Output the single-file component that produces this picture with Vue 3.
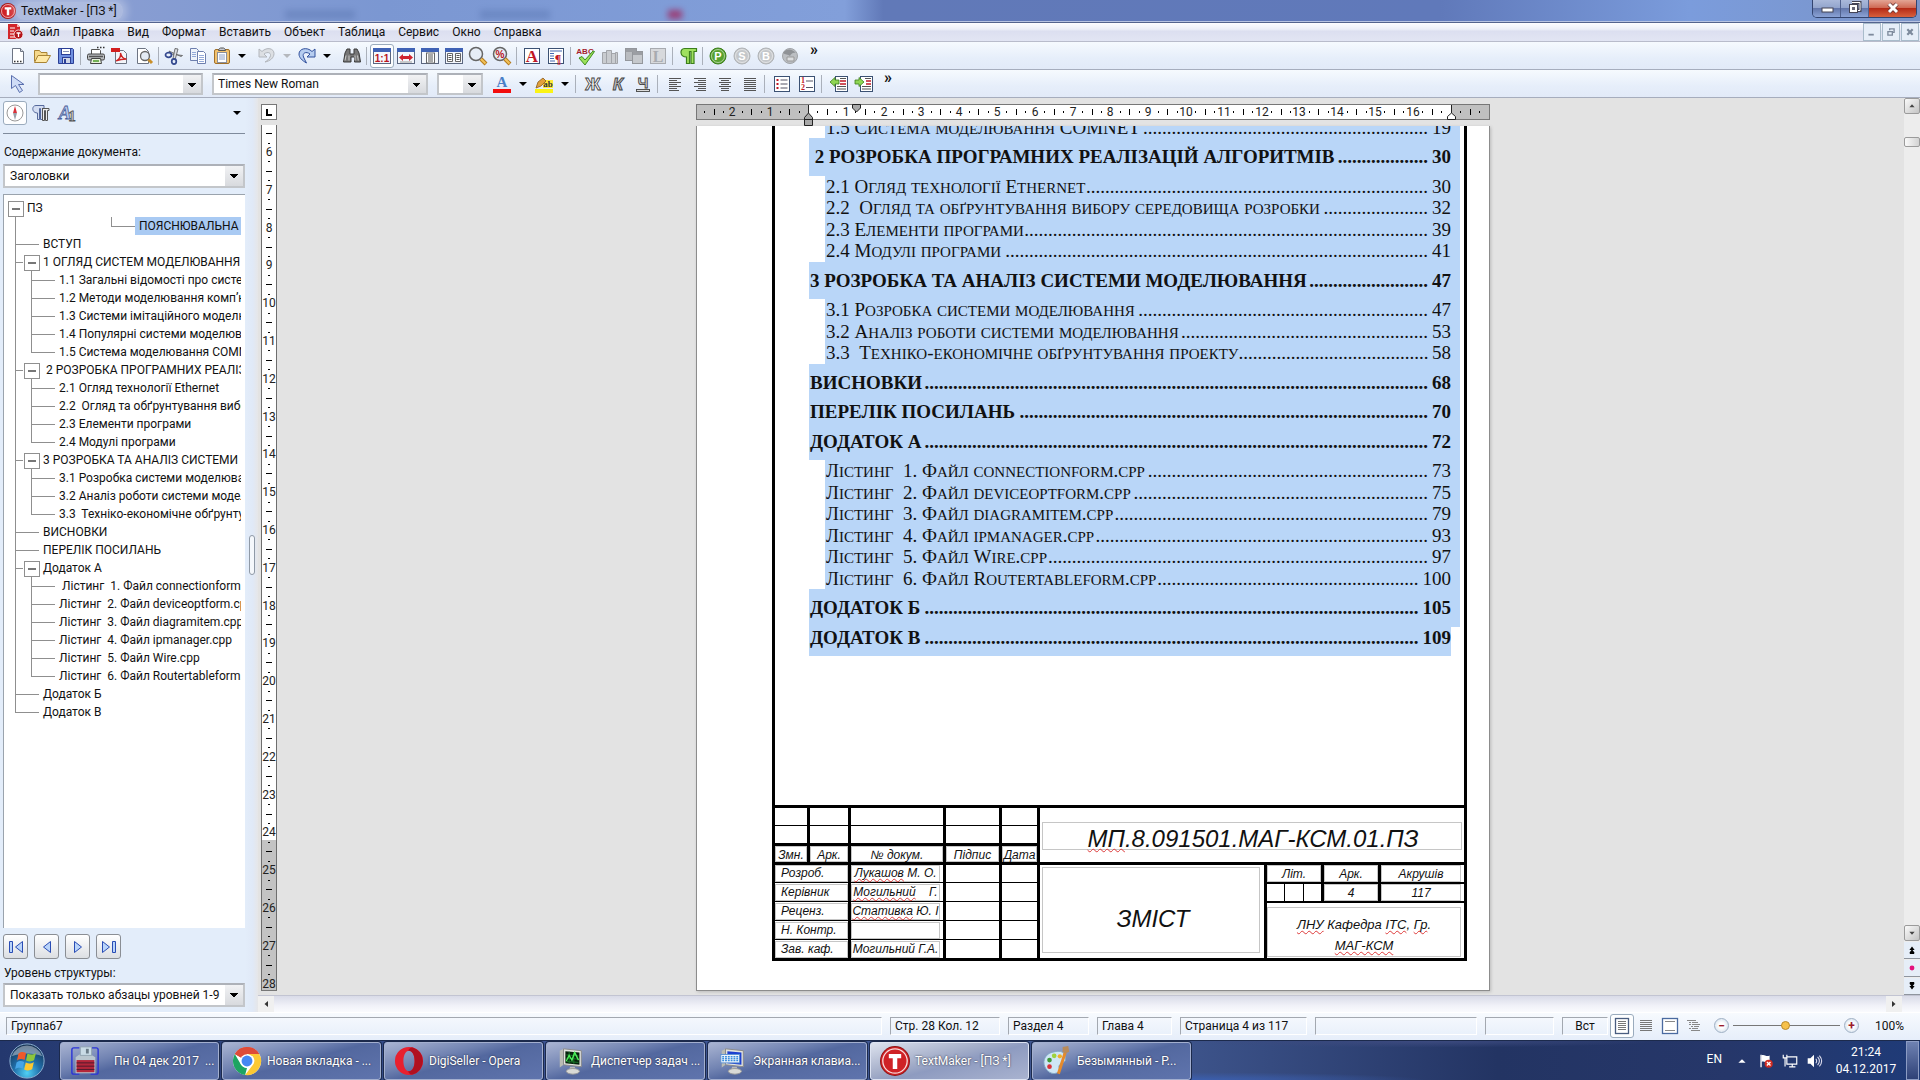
<template>
  <div class="app">
    <header class="titlebar">
      <svg class="title-logo" viewBox="0 0 16 16" v-html="icons.tmLogo"></svg>
      <h1 class="title-text">TextMaker - [ПЗ *]</h1>
      <span class="ghost-tab ghost-1"></span>
      <span class="ghost-tab ghost-2"></span>
      <span class="ghost-tab ghost-3"></span>
      <div class="win-buttons">
        <button class="win-btn" aria-label="Свернуть"><svg viewBox="0 0 28 17"><rect x="9" y="8" width="11" height="4" fill="#fff" stroke="#445" /></svg></button>
        <button class="win-btn" aria-label="Развернуть"><svg viewBox="0 0 28 17"><path d="M11 2.5h8v8h-2" fill="none" stroke="#445" stroke-width="3" /><path d="M11 2.5h8v8h-2" fill="none" stroke="#fff" /><rect x="8.500" y="4.500" width="8" height="8" fill="#fff" stroke="#445" /><rect x="11" y="7" width="3" height="3" fill="#667" /></svg></button>
        <button class="win-btn win-close" aria-label="Закрыть"><svg viewBox="0 0 28 17"><path d="M10 4l8 8M18 4l-8 8" stroke="#633" stroke-width="4.500" /><path d="M10 4l8 8M18 4l-8 8" stroke="#fff" stroke-width="3" /></svg></button>
      </div>
    </header>

    <nav class="menubar">
      <svg class="menu-logo" viewBox="0 0 16 16" v-html="icons.docLogo"></svg>
      <button v-for="m in menus" :key="m" class="menu-item">{{ m }}</button>
      <div class="mdi-buttons">
        <button aria-label="Свернуть документ"><svg viewBox="0 0 18 18"><path d="M5 12h6" stroke="#7d8a9c" stroke-width="2" /></svg></button>
        <button aria-label="Восстановить документ"><svg viewBox="0 0 18 18"><path d="M7.500 7V5.500h5v4H11M5.500 8.500h5v4h-5z" fill="none" stroke="#7d8a9c" stroke-width="1.500" /></svg></button>
        <button aria-label="Закрыть документ"><svg viewBox="0 0 18 18"><path d="M6 6l6 6M12 6l-6 6" stroke="#7d8a9c" stroke-width="2.500" /></svg></button>
      </div>
    </nav>

    <div class="toolbar">
      <template v-for="(t, i) in mainTools" :key="i">
        <span v-if="t === '|'" class="sep"></span>
        <span v-else-if="t === '_'" class="gap"></span>
        <button v-else-if="t === 'v'" class="drop" aria-label="Ещё"></button>
        <button v-else-if="t === 'w'" class="drop drop-off" aria-label="Ещё" disabled></button>
        <button v-else class="tool" :class="{ active: t === 'zoom100' }" :aria-label="t">
          <svg viewBox="0 0 20 20" v-html="icons[t]"></svg>
        </button>
      </template>
      <button class="more" aria-label="Другие кнопки">»</button>
    </div>

    <div class="toolbar toolbar-format">
      <button class="tool tool-pointer" aria-label="Выделение"><svg viewBox="0 0 20 20" v-html="icons.pointer"></svg></button>
      <select class="combo combo-style" aria-label="Стиль"><option></option></select>
      <select class="combo combo-font" aria-label="Шрифт"><option>Times New Roman</option></select>
      <select class="combo combo-size" aria-label="Размер"><option></option></select>
      <template v-for="(t, i) in formatTools" :key="i">
        <span v-if="t === '|'" class="sep"></span>
        <button v-else-if="t === 'v'" class="drop" aria-label="Ещё"></button>
        <button v-else class="tool" :aria-label="t"><svg viewBox="0 0 20 20" v-html="icons[t]"></svg></button>
      </template>
      <button class="more" aria-label="Другие кнопки">»</button>
    </div>

    <main class="workspace">
      <aside class="sidebar">
        <div class="side-tabs">
          <button class="side-tab active" aria-label="Навигация"><svg viewBox="0 0 20 20" v-html="icons.compass"></svg></button>
          <button class="side-tab" aria-label="Стили абзаца"><svg viewBox="0 0 20 20" v-html="icons.paraStyle"></svg></button>
          <button class="side-tab" aria-label="Стили символов"><svg viewBox="0 0 20 20" v-html="icons.charStyle"></svg></button>
          <button class="drop side-menu" aria-label="Меню панели"></button>
        </div>
        <label class="side-label" for="contents">Содержание документа:</label>
        <select id="contents" class="combo side-combo"><option>Заголовки</option></select>
        <ul class="tree">
          <li v-for="(n, i) in tree" :key="i" class="tree-row">
            <span v-for="(g, k) in n[0]" :key="k" class="guide" :class="guides[g]"></span>
            <span class="tree-text" :class="{ selected: i === 1 }">{{ n[1] }}</span>
          </li>
        </ul>
        <div class="nav-buttons">
          <button aria-label="В начало"><svg viewBox="0 0 20 20"><path d="M3.500 4.500h3v11h-3zM16.500 4.500v11L9.500 10z" /></svg></button>
          <button aria-label="Назад"><svg viewBox="0 0 20 20"><path d="M13.500 4.500v11L6.500 10z" /></svg></button>
          <button aria-label="Вперёд"><svg viewBox="0 0 20 20"><path d="M6.500 4.500v11l7-5.500z" /></svg></button>
          <button aria-label="В конец"><svg viewBox="0 0 20 20"><path d="M3.500 4.500v11l7-5.500zM13.500 4.500h3v11h-3z" /></svg></button>
        </div>
        <label class="side-label" for="level">Уровень структуры:</label>
        <select id="level" class="combo side-combo"><option>Показать только абзацы уровней 1-9</option></select>
      </aside>
      <div class="splitter"><span class="splitter-grip"></span></div>

      <section class="document">
        <div class="view">
          <div class="left-rail">
            <button class="tab-kind" aria-label="Тип табуляции"><svg viewBox="0 0 14 14"><path d="M5 4v6h5" fill="none" stroke="#000" stroke-width="2" /></svg></button>
            <svg class="ruler-v">
              <rect x="0" y="0" width="16" height="100%" fill="#fff" />
              <rect x="0" y="715" width="16" height="100%" fill="#c3c3c3" />
              <g v-for="m in vMarks" :key="m.y">
                <text v-if="m.n" x="8" :y="m.y + 4" text-anchor="middle">{{ m.n }}</text>
                <rect v-else :x="8 - m.w / 2" :y="m.y" :width="m.w" height="1" />
              </g>
              <path d="M0.500 0V2000M15.500 0V2000" stroke="#6e6e6e" />
            </svg>
          </div>
          <div class="canvas">
            <div class="ruler-wrap">
              <svg class="ruler-h" viewBox="0 0 794 24">
                <rect x="0.500" y="0.500" width="793" height="15" fill="#c0c0c0" stroke="#777" />
                <rect x="112" y="1" width="643" height="14" fill="#fff" />
                <g v-for="m in hMarks" :key="m.x">
                  <text v-if="m.n" :x="m.x" y="12" text-anchor="middle">{{ m.n }}</text>
                  <rect v-else :x="m.x" :y="8 - m.h / 2" width="1" :height="m.h" />
                </g>
                <path d="M156.500 0.500h8v3.500l-4 4-4-4z" fill="#a8a8a8" stroke="#222" />
                <path d="M112.500 1v8" stroke="#222" />
                <path d="M108.500 21.500v-8l4-4.500 4 4.500v8zM108.500 15.500h8" fill="#a8a8a8" stroke="#222" />
                <path d="M755.500 1v8" stroke="#222" />
                <path d="M751.500 15.500v-3l4-3.500 4 3.500v3z" fill="#fff" stroke="#222" />
              </svg>
            </div>
            <div class="paper-area">
              <article class="paper">
                <div class="frame">
                  <div ref="tocEl" class="toc">
                    <p v-for="(r, i) in toc" :key="i" class="toc-row" :class="{ chapter: r[2] }">
                      <span class="toc-title"><template v-for="(s, k) in split(r)" :key="k"><small v-if="s.small">{{ s.text }}</small><template v-else>{{ s.text }}</template></template></span>
                      <span class="leader" aria-hidden="true">{{ '.'.repeat(dots[i] || 0) }}</span>
                      <span class="toc-page">{{ r[1] }}</span>
                    </p>
                  </div>

                  <div class="stamp">
                    <table class="changes">
                      <colgroup><col class="c1"><col class="c2"><col class="c3"><col class="c4"><col class="c5"></colgroup>
                      <tbody>
                        <tr class="short"><td></td><td></td><td></td><td></td><td></td></tr>
                        <tr class="thick tall"><td></td><td></td><td></td><td></td><td></td></tr>
                        <tr class="thick head">
                          <td v-for="h in ['Змн.', 'Арк.', '№ докум.', 'Підпис', 'Дата']" :key="h"><div class="cell-box">{{ h }}</div></td>
                        </tr>
                        <tr v-for="(p, i) in people" :key="p[0]" :class="{ short: i === 0 || i === 4 }">
                          <td colspan="2"><div class="cell-box left">{{ p[0] }}</div></td>
                          <td class="name"><div class="cell-box"><span :class="{ typo: p[3] }">{{ p[1] }}</span>{{ p[2] }}</div></td>
                          <td></td><td></td>
                        </tr>
                      </tbody>
                    </table>
                    <div class="stamp-right">
                      <div class="doc-number"><div class="cell-box"><span class="typo">МП</span>.8.091501.МАГ-КСМ.01.ПЗ</div></div>
                      <div class="doc-bottom">
                        <div class="doc-title"><div class="cell-box">ЗМІСТ</div></div>
                        <div class="doc-side">
                          <div class="side-grid">
                            <div><div class="cell-box">Літ.</div></div>
                            <div><div class="cell-box">Арк.</div></div>
                            <div><div class="cell-box">Акрушів</div></div>
                            <div class="lits"><i></i><i></i><i></i></div>
                            <div><div class="cell-box">4</div></div>
                            <div><div class="cell-box">117</div></div>
                          </div>
                          <div class="dept"><div class="cell-box"><span><span class="typo">ЛНУ</span> Кафедра <span class="typo">ІТС</span>, <span class="typo">Гр</span>.</span><span class="typo">МАГ-КСМ</span></div></div>
                        </div>
                      </div>
                    </div>
                  </div>
                </div>
              </article>
            </div>
          </div>
          <div class="vscroll">
            <button class="sb-btn" aria-label="Вверх"><svg viewBox="0 0 16 16"><path d="M5 9.500h6L8 6z" fill="#444" /></svg></button>
            <div class="sb-track"><span class="sb-thumb"></span></div>
            <button class="sb-btn" aria-label="Вниз"><svg viewBox="0 0 16 16"><path d="M5 6.500h6L8 10z" fill="#444" /></svg></button>
            <button class="sb-nav" aria-label="Предыдущая страница"><svg viewBox="0 0 16 16"><path d="M5 8l3-4 3 4zM5 11l3-4 3 4zM5.500 11h5v1.500h-5z" /></svg></button>
            <button class="sb-nav" aria-label="Объект перехода"><svg viewBox="0 0 16 16"><circle cx="8" cy="8" r="2.800" fill="#e3127e" /></svg></button>
            <button class="sb-nav" aria-label="Следующая страница"><svg viewBox="0 0 16 16"><path d="M5 8l3 4 3-4zM5 5l3 4 3-4zM5.500 3.500h5V5h-5z" /></svg></button>
          </div>
        </div>
        <div class="hscroll">
          <button aria-label="Влево"><svg viewBox="0 0 16 16"><path d="M10 5v6L6.500 8z" fill="#333" /></svg></button>
          <button aria-label="Вправо"><svg viewBox="0 0 16 16"><path d="M6 5v6l3.500-3z" fill="#333" /></svg></button>
        </div>
      </section>
    </main>

    <footer class="statusbar">
      <span class="panel p-object">Группа67</span>
      <span class="panel p-pos">Стр. 28 Кол. 12</span>
      <span class="panel p-section">Раздел 4</span>
      <span class="panel p-chapter">Глава 4</span>
      <span class="panel p-page">Страница 4 из 117</span>
      <span class="panel p-wide"></span>
      <span class="panel p-empty"></span>
      <span class="panel p-ins">Вст</span>
      <button v-for="v in ['viewPage', 'viewCont', 'viewObj', 'viewOutline']" :key="v" class="view-btn" :class="{ active: v === 'viewPage' }" :aria-label="v">
        <svg viewBox="0 0 20 20" v-html="icons[v]"></svg>
      </button>
      <button class="zoom-btn zoom-out" aria-label="Уменьшить">−</button>
      <input class="zoom-range" type="range" min="0" max="200" value="98" aria-label="Масштаб">
      <button class="zoom-btn" aria-label="Увеличить">+</button>
      <span class="zoom-value">100%</span>
    </footer>

    <div class="taskbar">
      <button class="start" aria-label="Пуск"><svg viewBox="0 0 40 40" v-html="icons.start"></svg></button>
      <button v-for="t in tasks" :key="t[0]" class="task" :class="{ current: t[0] === 'tmLogo' }">
        <svg :viewBox="t[0] === 'tmLogo' ? '0 0 16 16' : '0 0 32 32'" v-html="icons[t[0]]"></svg>
        <span class="task-text" :class="{ shifted: t[0] === 'floppy' }">{{ t[1] }}</span>
      </button>
      <div class="tray">
        <span class="lang">EN</span>
        <button aria-label="Скрытые значки"><svg viewBox="0 0 20 20"><path d="M6 12h8l-4-4z" fill="#fff" /></svg></button>
        <button aria-label="Центр поддержки"><svg viewBox="0 0 20 20"><path d="M4.500 3v14" stroke="#fff" stroke-width="1.500" /><path d="M5 4c3-2 5 2 9 0v7c-4 2-6-2-9 0z" fill="#fff" /><circle cx="13" cy="13" r="4.500" fill="#d22c22" /><path d="M11 11l4 4M15 11l-4 4" stroke="#fff" stroke-width="1.500" /></svg></button>
        <button aria-label="Сеть"><svg viewBox="0 0 20 20" fill="none" stroke="#fff"><path d="M6.500 5.500h11v8h-11zM9 16.500h7M12.500 14v2M2.500 3v3.500h4V3M4.500 7v9" stroke-width="1.300" /></svg></button>
        <button aria-label="Громкость"><svg viewBox="0 0 20 20"><path d="M3 7h3l4-4v14l-4-4H3z" fill="#fff" /><path d="M12 7.500q2 2.500 0 5M14 5.500q4 4.500 0 9M16 4q5 6 0 12" fill="none" stroke="#dde" stroke-width="1.200" /></svg></button>
        <div class="clock"><span>21:24</span><span>04.12.2017</span></div>
        <button class="show-desktop" aria-label="Свернуть все окна"></button>
      </div>
    </div>
  </div>
</template>

<script setup>
import { onMounted, onUnmounted, ref } from 'vue';

const menus = ['Файл', 'Правка', 'Вид', 'Формат', 'Вставить', 'Объект', 'Таблица', 'Сервис', 'Окно', 'Справка'];

// '|' разделитель, '_' отступ, 'v' стрелка меню, 'w' недоступная стрелка
const mainTools = [
  'fileNew', 'open', 'save', '|', 'print', 'pdf', 'preview', '|', 'cut', 'copy', 'paste', 'v', '_',
  'undo', 'w', 'redo', 'v', '_', 'find', '|', 'zoom100', 'zoomWidth', 'zoomPage', 'zoomTwo', 'lens', 'lensPct', '|',
  'charFmt', 'paraFmt', '|', 'spell', 'thes', 'objs', 'boxL', '|', 'pilcrow', '|', 'ballP', 'ballS', 'ballB', 'globe',
];
const formatTools = [
  'fontColor', 'v', 'marker', 'v', '|', 'bold', 'italic', 'underline', '|',
  'alignL', 'alignR', 'alignC', 'alignJ', '|', 'bullets', 'numbers', '|', 'outdent', 'indent',
];

const guides = { v: 'g-v', t: 'g-t', l: 'g-l', h: 'g-h', b: 'g-box', _: 'g-none' };
const tree = [
  ['b', 'ПЗ'],
  ['v_____lh', 'ПОЯСНЮВАЛЬНА'],
  ['th', 'ВСТУП'],
  ['tb', '1 ОГЛЯД СИСТЕМ МОДЕЛЮВАННЯ'],
  ['vth', '1.1 Загальні відомості про системи'],
  ['vth', '1.2 Методи моделювання комп’ютерних'],
  ['vth', '1.3 Системи імітаційного моделювання'],
  ['vth', '1.4 Популярні системи моделювання'],
  ['vlh', '1.5 Система моделювання COMNET'],
  ['tb', ' 2 РОЗРОБКА ПРОГРАМНИХ РЕАЛІЗАЦІЙ'],
  ['vth', '2.1 Огляд технології Ethernet'],
  ['vth', '2.2  Огляд та обґрунтування вибору'],
  ['vth', '2.3 Елементи програми'],
  ['vlh', '2.4 Модулі програми'],
  ['tb', '3 РОЗРОБКА ТА АНАЛІЗ СИСТЕМИ'],
  ['vth', '3.1 Розробка системи моделювання'],
  ['vth', '3.2 Аналіз роботи системи моделювання'],
  ['vlh', '3.3  Техніко-економічне обґрунтування'],
  ['th', 'ВИСНОВКИ'],
  ['th', 'ПЕРЕЛІК ПОСИЛАНЬ'],
  ['tb', 'Додаток А'],
  ['vth', ' Лістинг  1. Файл connectionform.cpp'],
  ['vth', 'Лістинг  2. Файл deviceoptform.cpp'],
  ['vth', 'Лістинг  3. Файл diagramitem.cpp'],
  ['vth', 'Лістинг  4. Файл ipmanager.cpp'],
  ['vth', 'Лістинг  5. Файл Wire.cpp'],
  ['vlh', 'Лістинг  6. Файл Routertableform.cpp'],
  ['th', 'Додаток Б'],
  ['lh', 'Додаток В'],
];

const toc = [
  ['1.5 Система моделювання COMNET', 19],
  [' 2 РОЗРОБКА ПРОГРАМНИХ РЕАЛІЗАЦІЙ АЛГОРИТМІВ', 30, true],
  ['2.1 Огляд технології Ethernet', 30],
  ['2.2  Огляд та обґрунтування вибору середовища розробки', 32],
  ['2.3 Елементи програми', 39],
  ['2.4 Модулі програми', 41],
  ['3 РОЗРОБКА ТА АНАЛІЗ СИСТЕМИ МОДЕЛЮВАННЯ', 47, true],
  ['3.1 Розробка системи моделювання', 47],
  ['3.2 Аналіз роботи системи моделювання', 53],
  ['3.3  Техніко-економічне обґрунтування проекту', 58],
  ['ВИСНОВКИ', 68, true],
  ['ПЕРЕЛІК ПОСИЛАНЬ', 70, true],
  ['ДОДАТОК А', 72, true],
  ['Лістинг  1. Файл connectionform.cpp', 73],
  ['Лістинг  2. Файл deviceoptform.cpp', 75],
  ['Лістинг  3. Файл diagramitem.cpp', 79],
  ['Лістинг  4. Файл ipmanager.cpp', 93],
  ['Лістинг  5. Файл Wire.cpp', 97],
  ['Лістинг  6. Файл Routertableform.cpp', 100],
  ['ДОДАТОК Б', 105, true],
  ['ДОДАТОК В', 109, true],
];

// отточие: точка занимает четверть кегля
const tocEl = ref(null);
const dots = ref([]);
function fillLeaders() {
  dots.value = [...tocEl.value.querySelectorAll('.leader')].map((el) => {
    const size = parseFloat(getComputedStyle(el).fontSize);
    return Math.floor(el.clientWidth / (size / 4));
  });
}
onMounted(() => {
  fillLeaders();
  window.addEventListener('resize', fillLeaders);
});
onUnmounted(() => window.removeEventListener('resize', fillLeaders));

// строчные буквы выводятся малыми прописными
function split(row) {
  return row[0]
    .split(/([a-zа-яіїєґ]+)/)
    .filter(Boolean)
    .map((text) => ({ text, small: /^[a-zа-яіїєґ]/.test(text) }));
}

const people = [
  ['Розроб.', 'Лукашов', ' М. О.', true],
  ['Керівник', 'Могильний', '    Г.', true],
  ['Реценз.', 'Стативка', ' Ю. І', true],
  ['Н. Контр.', '', '', false],
  ['Зав. каф.', 'Могильний Г.А.', '', false],
];

const CM = 37.8;
const hMarks = [];
for (let q = -11; q <= 71; q++) {
  if (q === 0 || q === 68) continue;
  const x = Math.round(112 + (q * CM) / 4);
  if (q % 4 === 0) hMarks.push({ x, n: Math.abs(q / 4) });
  else hMarks.push({ x, h: q % 2 ? 2 : 6 });
}
const vMarks = [];
for (let q = 22; q <= 112; q++) {
  const y = Math.round(27 + ((q - 24) * CM) / 4);
  if (q % 4 === 0) vMarks.push({ y, n: q / 4 });
  else vMarks.push({ y, w: q % 2 ? 2 : 6 });
}

const tasks = [
  ['floppy', 'Пн 04 дек 2017  ...'],
  ['chrome', 'Новая вкладка - ...'],
  ['opera', 'DigiSeller - Opera'],
  ['taskmgr', 'Диспетчер задач ...'],
  ['osk', 'Экранная клавиа...'],
  ['tmLogo', 'TextMaker - [ПЗ *]'],
  ['paint', 'Безымянный - P...'],
];

const ball = (c, e, l) => `<circle cx="10" cy="10" r="8" fill="${c}" stroke="${e}"/><circle cx="10" cy="10" r="6.500" fill="none" stroke="#fff" stroke-opacity=".5"/><text x="10" y="14" text-anchor="middle" font-family="Liberation Sans" font-weight="700" font-size="11" fill="#fff">${l}</text>`;
const win = (inner) => `<rect x="1.500" y="2.500" width="17" height="15" fill="#f4f7fc" stroke="#5a6680"/><path d="M1 2h18v4H1z" fill="#3f62b5"/>${inner}`;
const lines = (d, c = '#555') => `<path d="${d}" stroke="${c}" stroke-width="1.200" fill="none"/>`;
const lensShape = '<circle cx="8" cy="8" r="6.500" fill="#e6edf6" stroke="#666" stroke-width="1.500"/><path d="M13 13l5 5" stroke="#b57a1c" stroke-width="4"/><path d="M13 13l4.500 4.500" stroke="#f1c25a" stroke-width="2"/>';
const monitor = (screen) => `<path d="M4 5l4-2v17l-4 3z" fill="#b9bcb4"/><path d="M8 3l19 2v17l-19-2z" fill="#e3e4df" stroke="#888"/>${screen}<path d="M15 22h5l1 4h-7z" fill="#bbb"/><ellipse cx="18" cy="27" rx="7" ry="3" fill="#d9dad6" stroke="#999"/>`;

const icons = {
  tmLogo: '<circle cx="8" cy="8" r="8" fill="#8f1414"/><circle cx="8" cy="8" r="7.500" fill="#cf2226"/><circle cx="8" cy="8" r="6.500" fill="none" stroke="#f7d9d9" stroke-width=".7"/><path d="M4.700 4.300h6.600v2.200H9.200v5.700H6.800V6.500H4.700z" fill="#fff"/>',
  docLogo: '<path d="M1 0h9l3 3v12H1z" fill="#d3262b"/><path d="M10 0v3h3z" fill="#f5b4b4"/><path d="M3 4h5M3 7h4M3 10h4M3 13h5" stroke="#fff" stroke-width="1.200"/><circle cx="11.500" cy="10.500" r="4.500" fill="#b31218" stroke="#fff" stroke-width=".8"/><path d="M9.500 9h4M11.500 9v4" stroke="#fff" stroke-width="1.300"/>',
  fileNew: '<path d="M4.500 2.500h8l3 3v12h-11z" fill="#fff" stroke="#6d7483"/><path d="M12.500 2.500v3h3" fill="#d9dde5" stroke="#6d7483"/><path d="M6 15.500h1.500M9 15.500h1.500M12 15.500h1.500" stroke="#333" stroke-width="1.300"/>',
  open: '<path d="M2.500 15.500v-11h5l1.500 2h6v3" fill="#f5d98c" stroke="#a98435"/><path d="M2.500 16.500l3.500-7h12.500l-4 7z" fill="#ffe9a6" stroke="#a98435"/>',
  save: '<path d="M2.500 2.500h14l1 1v14h-15z" fill="#6f8fe0" stroke="#2b3f96"/><rect x="5.500" y="2.500" width="9" height="6" fill="#fff" stroke="#2b3f96"/><path d="M7 5.500h6" stroke="#8893b8"/><rect x="6.500" y="11.500" width="8" height="6" fill="#cfd6e8" stroke="#2b3f96"/><path d="M8 13h2v4H8z" fill="#2b3f96"/>',
  print: '<path d="M5.500 8V3.500h8l1 1V8" fill="#fff" stroke="#555"/><path d="M11 1.500h1.500M14 1.500h1.500M17 1.500h1.500" stroke="#333" stroke-width="1.500"/><rect x="1.500" y="8" width="17" height="6" rx="1.500" fill="#b9bcc0" stroke="#444"/><path d="M3 10.500h14" stroke="#555" stroke-width="1.500"/><path d="M5.500 12.500h9l1 5h-11z" fill="#e8f3dd" stroke="#444"/><path d="M7 15h6" stroke="#4c9a2a" stroke-width="1.500"/>',
  pdf: '<path d="M5.500 4.500h8l3 3v10h-11z" fill="#f3f5f9" stroke="#6d7483"/><rect x="1" y="2" width="9" height="4" fill="#d21f1f"/><path d="M6 15c4-2 5-5 4.500-8 1 4 2.500 6 6 6-4 0-7 .5-10.500 2z" fill="none" stroke="#c22" stroke-width="1.300"/>',
  preview: '<path d="M3.500 2.500h8l3 3v12h-11z" fill="#fff" stroke="#6d7483"/><circle cx="11" cy="10" r="4.500" fill="#dfe7f2" fill-opacity=".85" stroke="#666" stroke-width="1.300"/><path d="M14.500 13.500l3.500 3.500" stroke="#c98f2a" stroke-width="3"/>',
  cut: '<path d="M5 5l12 5.500 1.500-1L7 8z" fill="#d9dbe0" stroke="#555" stroke-width=".8"/><path d="M11 2.500l-2 10 2 1.500 3-11z" fill="#d9dbe0" stroke="#555" stroke-width=".8"/><ellipse cx="4.500" cy="9" rx="3" ry="2.300" fill="none" stroke="#34498f" stroke-width="1.700"/><ellipse cx="10" cy="15.500" rx="2.300" ry="2.600" fill="none" stroke="#34498f" stroke-width="1.700"/>',
  copy: '<path d="M2.500 2.500h6l2 2v10h-8z" fill="#eef3fb" stroke="#6d7fae"/><path d="M9.500 5.500h6l2 2v10h-8z" fill="#fff" stroke="#6d7fae"/>' + lines('M4 6.500h4M4 8.500h4M4 10.500h4M11 9.500h5M11 11.500h5M11 13.500h5M11 15.500h5', '#93a9d8'),
  paste: '<rect x="2.500" y="3.500" width="15" height="14" rx="1.500" fill="#f3c26d" stroke="#a0702a"/><rect x="5.500" y="6.500" width="9" height="10" fill="#fff" stroke="#8a8f9c"/><path d="M6.500 4.500h7v-1l-2-1.500h-3l-2 1.500z" fill="#c7cbd3" stroke="#555"/>' + lines('M7 9h6M7 11h6M7 13h6', '#8ea1c9'),
  undo: '<path d="M2 3v8h8L7 8c4-3 8-1 6 3-.8 2-2.500 3.500-5 5 5-1 9-4 9-8.500C17 2.500 10 .5 5 5.500z" fill="#dcdfe3" stroke="#b2b6bc"/>',
  redo: '<path d="M18 3v8h-8l3-3C9 5 5 7 6.500 11c.8 2 2 4 3 6C5 14.500 2 11.500 2 8 2 2.500 10 .5 15 5.500z" fill="#b6cdf0" stroke="#31509c"/>',
  find: '<path d="M3 7l2-4h3v5h4V3h3l2 4 1.500 9h-6v-5h-3.500v5H1.500z" fill="#777" stroke="#3a3a3a"/><path d="M4 9.500l-1 5M7 9.500v5M13 9.500v5M15.500 9.500l.8 5" stroke="#ccc"/>',
  zoom100: win('<text x="10" y="16" text-anchor="middle" font-family="Liberation Sans" font-weight="700" font-size="10" fill="#b81420">1:1</text>'),
  zoomWidth: win('<path d="M3 11.500l4-3.500v2h6V8l4 3.500-4 3.500v-2H7v2z" fill="#cf2430"/>' + lines('M4 16h12', '#aaa')),
  zoomPage: win('<rect x="6.500" y="7" width="8" height="10" fill="#fff" stroke="#666"/>' + lines('M8 9h5M8 11h5M8 13h5M8 15h5')),
  zoomTwo: win('<path d="M3.500 7.500h5v8h-5zM11.500 7.500h5v8h-5z" fill="#fff" stroke="#666"/>' + lines('M4.500 9.500h3M4.500 11.500h3M4.500 13.500h3M12.500 9.500h3M12.500 11.500h3M12.500 13.500h3')),
  lens: lensShape,
  lensPct: lensShape + '<text x="8" y="11.500" text-anchor="middle" font-family="Liberation Sans" font-weight="700" font-size="10" fill="#b81420">%</text>',
  charFmt: '<rect x="2.500" y="2.500" width="15" height="15" fill="#fff" stroke="#3b5173"/><text x="10" y="16" text-anchor="middle" font-family="Liberation Serif" font-weight="700" font-size="17" fill="#c01826">A</text>',
  paraFmt: '<rect x="2.500" y="2.500" width="15" height="15" fill="#fff" stroke="#3b5173"/>' + lines('M4 5h12M4 7.500h4M4 10h4M4 12.500h4M4 15h5', '#4468b0') + '<text x="12" y="17" text-anchor="middle" font-family="Liberation Serif" font-weight="700" font-size="12" fill="#c01826">¶</text>',
  spell: '<text x="9" y="8" text-anchor="middle" font-family="Liberation Sans" font-weight="700" font-size="8" fill="#a51d2d">ABC</text><path d="M3 12l3-1.500 3 3.500 8-9 1.500.5L9 19z" fill="#9be05a" stroke="#3f8f1f"/>',
  thes: '<path d="M2.500 6.500h4v11h-4zM6.500 4.500h5v13h-5zM11.500 7.500h4v10h-4zM15.500 6.500h2v11h-2z" fill="#c9ccd0" stroke="#a2a5aa"/>',
  objs: '<rect x="1.500" y="2.500" width="11" height="12" fill="#b9bcc0" stroke="#94979c"/><rect x="8.500" y="5.500" width="10" height="12" fill="#c5c8cc" stroke="#94979c"/><path d="M2 3h10v3H2zM9 6h9v3H9z" fill="#9b9ea3"/>',
  boxL: '<rect x="2.500" y="2.500" width="15" height="15" fill="#d7d9dc" stroke="#a8abb0"/><text x="10" y="16" text-anchor="middle" font-family="Liberation Serif" font-weight="700" font-size="16" fill="#a8abb0">L</text>',
  pilcrow: '<path d="M6.500 2.500h12v3h-2.500v12h-3v-12h-1.500v12h-3v-6.500c-7 0-7-8.500-2-8.500z" fill="#9fe05f" stroke="#3c7f1c" stroke-width="1.200"/>',
  ballP: ball('#57a12f', '#3c7f1c', 'P'),
  ballS: ball('#c4c7ca', '#b0b3b6', 'S'),
  ballB: ball('#c4c7ca', '#b0b3b6', 'B'),
  globe: '<circle cx="10" cy="10" r="7.500" fill="#bcbfc3" stroke="#a0a3a7"/><path d="M3 7c4-5 9-4 13 0-3-1-5 1-6 3-2-2-5-1-7-3z" fill="#8f9296"/><path d="M7 11h7v4H7z" fill="#dcdee0" stroke="#999"/>',
  pointer: '<path d="M3.500 1.500v13l4-3 4 7 3-2-4-6h5.500z" fill="#cfdcf6" stroke="#5a6fae"/>',
  fontColor: '<text x="10" y="13" text-anchor="middle" font-family="Liberation Serif" font-weight="700" font-size="15" fill="#4a7fc8">A</text><rect x="1" y="15" width="18" height="4" fill="#f20d0d"/>',
  marker: '<rect x="9" y="6" width="10" height="8" fill="#ffe93a"/><path d="M2 14l2-6 5-4 3 3-5 5z" fill="#e2a13c" stroke="#8a5b1a" stroke-width=".8"/><text x="14" y="13" text-anchor="middle" font-family="Liberation Serif" font-weight="700" font-size="9" fill="#333">ab</text><rect x="1" y="15" width="18" height="4" fill="#fbf315"/>',
  bold: '<text x="10" y="16" text-anchor="middle" font-family="Liberation Sans" font-weight="700" font-size="17" fill="#fff" stroke="#444" stroke-width=".9">Ж</text>',
  italic: '<text x="10" y="16" text-anchor="middle" font-family="Liberation Sans" font-weight="700" font-style="italic" font-size="17" fill="#bbb" stroke="#444" stroke-width=".9">К</text>',
  underline: '<text x="10" y="14" text-anchor="middle" font-family="Liberation Sans" font-weight="700" font-size="15" fill="#ddd" stroke="#444" stroke-width=".9">Ч</text><rect x="3.500" y="15.500" width="13" height="2" fill="#ddd" stroke="#444" stroke-width=".9"/>',
  alignL: lines('M4 4.500h12M4 6.500h8M4 8.500h12M4 10.500h8M4 12.500h12M4 14.500h8M4 16.500h10'),
  alignR: lines('M4 4.500h12M8 6.500h8M4 8.500h12M8 10.500h8M4 12.500h12M8 14.500h8M6 16.500h10'),
  alignC: lines('M4 4.500h12M6 6.500h8M4 8.500h12M6 10.500h8M4 12.500h12M6 14.500h8M6 16.500h8'),
  alignJ: lines('M4 4.500h12M4 6.500h12M4 8.500h12M4 10.500h12M4 12.500h12M4 14.500h12M4 16.500h12'),
  bullets: '<rect x="2.500" y="2.500" width="15" height="15" fill="#fff" stroke="#3b5173"/><path d="M4.500 6h2M4.500 10h2M4.500 14h2" stroke="#c01826" stroke-width="2"/>' + lines('M8.500 6h7M8.500 10h7M8.500 14h7', '#556'),
  numbers: '<rect x="2.500" y="2.500" width="15" height="15" fill="#fff" stroke="#3b5173"/><text x="6" y="9" text-anchor="middle" font-family="Liberation Serif" font-weight="700" font-size="8" fill="#c01826">1</text><text x="6" y="16" text-anchor="middle" font-family="Liberation Serif" font-weight="700" font-size="8" fill="#c01826">2</text>' + lines('M9 7h7M9 13.500h7', '#556'),
  outdent: '<rect x="6.500" y="2.500" width="12" height="15" fill="#fff" stroke="#3b5173"/>' + lines('M11 4.500h6M8 12.500h9M8 15h9') + '<path d="M11 7h6M11 10h6" stroke="#c01826" stroke-width="1.500"/><path d="M1 8l5-4.500V6h4v4H6v2.500z" fill="#8fd653" stroke="#3c7f1c" stroke-width=".8"/>',
  indent: '<rect x="6.500" y="2.500" width="12" height="15" fill="#fff" stroke="#3b5173"/>' + lines('M11 4.500h6M8 12.500h9M8 15h9') + '<path d="M12 7h5M12 10h5" stroke="#c01826" stroke-width="1.500"/><path d="M10 8L5 3.500V6H1v4h4v2.500z" fill="#8fd653" stroke="#3c7f1c" stroke-width=".8"/>',
  compass: '<circle cx="10" cy="10" r="8" fill="#fff" stroke="#999"/><path d="M10 3l2 7H8z" fill="#d8323a"/><path d="M10 17l-2-7h4z" fill="#9aa0aa"/>',
  paraStyle: '<path d="M5 2.500h8v3h-1.500v11h-2v-11h-1v11h-2V10c-6 0-6-7.500-1.500-7.500z" fill="#d3ddf2" stroke="#55699c"/><path d="M11 5.500h7v2h-1.500v10h-2v-10h-1v10h-2V5.500z" fill="#eee" stroke="#555"/>',
  charStyle: '<text x="8" y="16" text-anchor="middle" font-family="Liberation Serif" font-weight="700" font-style="italic" font-size="19" fill="#b9c9ea" stroke="#4a5f99" stroke-width=".8">A</text><text x="15" y="18" text-anchor="middle" font-family="Liberation Serif" font-weight="700" font-size="15" fill="#ccc" stroke="#555" stroke-width=".8">1</text>',
  viewPage: '<rect x="3.500" y="2.500" width="13" height="15" fill="#fff" stroke="#4a5d80" stroke-width="1.300"/>' + lines('M6 5.500h8M6 7.500h8M6 9.500h8M6 11.500h8M6 13.500h8', '#777'),
  viewCont: lines('M4 4.500h12M4 6.500h12M4 8.500h12M4 10.500h12M4 12.500h12M4 14.500h12', '#777'),
  viewObj: '<rect x="2.500" y="2.500" width="15" height="15" fill="#fff" stroke="#4a6aa0" stroke-width="1.300"/>' + lines('M5 5.500h10M5 14.500h10', '#888'),
  viewOutline: lines('M3 4.500h9M5 6.500h2M8 6.500h6M5 8.500h2M8 8.500h8M7 10.500h2M10 10.500h5M5 12.500h2M8 12.500h6M7 14.500h9', '#888'),
  start: '<defs><radialGradient id="orb" cx=".5" cy=".85" r=".8"><stop offset="0" stop-color="#4fd0f5"/><stop offset=".5" stop-color="#1f6da8"/><stop offset="1" stop-color="#173456"/></radialGradient></defs><circle cx="20" cy="20" r="18" fill="url(#orb)" stroke="#8fb4d6"/><path d="M4 15a17 17 0 0132 0c-9-4-22-4-32 0z" fill="#fff" fill-opacity=".4"/><path d="M11 12c3-2 5-2 8-.5L17.500 19c-3-1.500-5-1.300-8 .5z" fill="#ee5a2a"/><path d="M20.500 12c3 1.500 5.500 1.500 9-.5L27.500 19c-3 2-5.500 1.800-8.500.5z" fill="#8dc63c"/><path d="M9 21.500c3-2 5-2 8-.5l-1.500 7c-3-1.500-5-1.300-8 .5z" fill="#45a5e8"/><path d="M18.700 21.500c3 1.500 5.500 1.500 8.500-.5l-1.700 7.500c-3 2-5.500 1.800-8.500.5z" fill="#fdc830"/>',
  floppy: '<path d="M10 2H4q-2 0-2 2v24q0 2 2 2h6M22 2h6q2 0 2 2v24q0 2-2 2h-6" fill="none" stroke="#2a33d8" stroke-width="1.500"/><path d="M6 12l4-3h12l5 3v17H6z" fill="#b9c6cf"/><rect x="11" y="1" width="12" height="9" fill="#c9dbe6" stroke="#93a5b2"/><rect x="17" y="3" width="3" height="5" fill="#6b7c88"/><rect x="7" y="15" width="19" height="13" fill="#b3263a"/><path d="M7 18h19M7 21.500h19M7 25h19" stroke="#4a1a2c"/>',
  chrome: '<circle cx="16" cy="16" r="15" fill="#fff"/><path d="M16 16L3 8.500A15 15 0 0129 8.500H16z" fill="#de4b38"/><path d="M16 1a15 15 0 0113 7.500H16a7.500 7.500 0 00-6.500 3.700L3 8.500A15 15 0 0116 1z" fill="#de4b38"/><path d="M3 8.500l6.500 11.300A7.500 7.500 0 0016 23.500l-2 7.400A15 15 0 013 8.500z" fill="#1da462"/><path d="M29 8.500a15 15 0 01-15 22.400l8.500-11.100a7.500 7.500 0 00-.5-9L16 8.500z" fill="#fcc934"/><circle cx="16" cy="16" r="7.300" fill="#fff"/><circle cx="16" cy="16" r="5.800" fill="#4587f3"/>',
  opera: '<path fill-rule="evenodd" d="M16 1a15 15 0 100 30 15 15 0 000-30zm0 4c3.500 0 6 5 6 11s-2.500 11-6 11-6-5-6-11 2.500-11 6-11z" fill="#e8202f"/><path d="M20 1.600a15 15 0 010 28.800c-2 .6-4-1-5-3.600 4 1 7-4 7-10.800S19 4.500 15 5.200c1-2.600 3-4.200 5-3.600z" fill="#b01020"/>',
  taskmgr: monitor('<path d="M10 5.500l15 1.500v13L10 18.500z" fill="#06210c"/><path d="M11 9.500l13 1M11 13l13 1M11 16.500l13 1M14 6v12.500M19 6.500v12.500" stroke="#1c7a2c"/><path d="M11 16l3-6 3 5 3-8 4 8" fill="none" stroke="#4df05a" stroke-width="1.500"/>'),
  osk: monitor('<path d="M10 5.500l15 1.500v13L10 18.500z" fill="#1c3fd0"/><rect x="3" y="9" width="20" height="9" fill="#eef4fb" stroke="#5a8fd0"/><path d="M4.500 11.500h17M4.500 13.500h17M4.500 15.500h17" stroke="#3b8fdd" stroke-width="1.500" stroke-dasharray="2 1"/>'),
  paint: '<path d="M14 6C4 7 0 15 3 22s10 9 14 6-1-5 2-8 7-2 6-8-5-7-11-6z" fill="#cfe6f5" stroke="#7fa5c4"/><circle cx="8" cy="15" r="2.500" fill="#3f9a3a"/><circle cx="13" cy="10.500" r="2.500" fill="#9fd33e"/><circle cx="8" cy="22" r="2.500" fill="#d8323a"/><circle cx="19" cy="11" r="2.300" fill="#f0b02a"/><path d="M24 4l3 1-8 25-3-1z" fill="#e58a2c"/><path d="M22 1l6-1 1 6-4 2-3-2z" fill="#b98b5a"/>',
};
</script>

<style>
html,
body {
  margin: 0;
  overflow: hidden;
}
</style>

<style scoped>
.app {
  height: 100vh;
  display: flex;
  flex-direction: column;
  font: 12px/16px Roboto, "Open Sans", sans-serif;
  color: #111;
  background: #e3e3e3;
}
.app * {
  box-sizing: border-box;
}
button,
select,
input {
  font: inherit;
  color: inherit;
  margin: 0;
  padding: 0;
  border: 0;
  border-radius: 0;
  background: none;
}
svg {
  display: block;
  flex: none;
}

/* заголовок окна */
.titlebar {
  position: relative;
  flex: none;
  height: 22px;
  display: flex;
  align-items: center;
  overflow: hidden;
  background: linear-gradient(90deg, #8ea0d2, #7b97d2 20%, #829fda 44%, #6179b8 46%, #6079ba 75%, #7b9cdc 88%, #7a94c8);
  border-bottom: 1px solid #b8c4e2;
}
.title-logo {
  width: 16px;
  height: 16px;
}
.title-text {
  margin: 0;
  padding: 0 6px 0 5px;
  font-size: 12px;
  line-height: 18px;
  font-weight: 400;
  border-radius: 8px;
  background: rgba(255, 255, 255, 0.3);
  box-shadow: 0 0 8px 4px rgba(255, 255, 255, 0.3);
}
.ghost-tab {
  position: absolute;
  top: 10px;
  width: 70px;
  height: 9px;
  background: #47639e;
  opacity: 0.3;
  filter: blur(3px);
}
.ghost-1 { left: 285px; }
.ghost-2 { left: 480px; }
.ghost-3 { left: 668px; width: 14px; background: #a5174f; opacity: 0.7; }
.win-buttons {
  display: flex;
  align-self: flex-start;
  margin: 0 3px 0 auto;
  border: 1px solid #33446f;
  border-top: 0;
  border-radius: 0 0 5px 5px;
  overflow: hidden;
}
.win-btn {
  width: 28px;
  height: 17px;
  display: flex;
  justify-content: center;
  border-right: 1px solid #51628f;
  background: linear-gradient(#aab9da, #93a5cd 45%, #6377ab 50%, #8ba3d6);
}
.win-btn svg { width: 28px; height: 17px; }
.win-close {
  width: 47px;
  border-right: 0;
  background: linear-gradient(#e3a595, #cf6a55 45%, #b52b17 50%, #d8603c);
}

/* меню */
.menubar {
  flex: none;
  display: flex;
  align-items: center;
  height: 20px;
  padding-left: 7px;
  border-top: 1px solid #54648e;
  border-bottom: 1px solid #b9bccb;
  background: linear-gradient(#fdfdff, #eceff8 35%, #dcdff0 45%, #e2e5f3);
}
.menu-logo { width: 16px; height: 16px; }
.menu-item { padding: 0 6px 0 7px; line-height: 18px; }
.mdi-buttons { margin: 0 1px 0 auto; display: flex; gap: 1px; }
.mdi-buttons button { width: 18px; height: 18px; border: 1px solid #a9bccb; background: #e6eef8; }
.mdi-buttons svg { width: 16px; height: 16px; }

/* панели инструментов */
.toolbar {
  flex: none;
  display: flex;
  align-items: center;
  height: 28px;
  padding-left: 6px;
  border-bottom: 1px solid #a6adbd;
  background: linear-gradient(#f6fafe, #e6eefa 60%, #e2eaf8);
}
.toolbar-format { padding-left: 5px; }
.tool {
  width: 24px;
  height: 24px;
  display: flex;
  align-items: center;
  justify-content: center;
  flex: none;
}
.toolbar-format .tool { width: 25px; }
.tool svg { width: 20px; height: 20px; }
.tool.active,
.side-tab.active,
.view-btn.active {
  border: 1px solid #9aabbd;
  border-radius: 3px;
  background: #fdfeff;
}
.sep {
  flex: none;
  width: 6px;
  height: 18px;
  background: linear-gradient(#aab0ba, #aab0ba) 2px 0 / 1px 100% no-repeat;
}
.gap { flex: none; width: 5px; }
.drop { flex: none; width: 16px; height: 20px; display: flex; align-items: center; justify-content: center; }
.drop::before {
  content: "";
  border: 4px solid transparent;
  border-top-color: #000;
  border-bottom: 0;
}
.drop-off::before { border-top-color: #b5b8bd; }
.more { align-self: flex-start; padding-left: 8px; font-size: 16px; line-height: 16px; font-weight: 700; }

.combo {
  appearance: none;
  height: 24px;
  padding: 0 20px 0 4px;
  border: 2px solid #c3c6ca;
  border-top-color: #adb1b8;
  color: #111;
  background:
    linear-gradient(to top right, transparent 50%, #000 50%) right 9px top 8px / 4px 4px no-repeat,
    linear-gradient(to top left, transparent 50%, #000 50%) right 5px top 8px / 4px 4px no-repeat,
    linear-gradient(#f1f2f4, #d8dade) right / 18px 100% no-repeat,
    #fff;
}
.toolbar .combo { height: 22px; margin-right: 9px; flex: none; }
.toolbar .tool-pointer { margin-right: 8px; }
.toolbar .combo-style { width: 165px; }
.toolbar .combo-font { width: 216px; }
.toolbar .combo-size { width: 46px; margin-right: 6px; }
.toolbar-format .drop { width: 17px; }
.toolbar-format .sep { width: 7px; }

/* рабочая область */
.workspace { flex: 1; min-height: 0; display: flex; }
.sidebar {
  flex: none;
  width: 245px;
  display: flex;
  flex-direction: column;
  padding: 0 0 5px 3px;
  background: #e3edfa;
}
.side-tabs {
  display: flex;
  align-items: center;
  gap: 2px;
  height: 36px;
  padding-bottom: 5px;
  border-bottom: 1px solid #7f8b9c;
}
.side-tab { width: 24px; height: 24px; display: flex; align-items: center; justify-content: center; }
.side-tab svg { width: 20px; height: 20px; }
.side-menu { margin-left: auto; }
.side-label { padding: 10px 0 4px 1px; }
.side-label[for="level"] { padding: 6px 0 2px 1px; }
.side-combo { flex: none; width: 100%; padding-left: 5px; }
.tree {
  flex: 1;
  min-height: 0;
  margin: 6px 0 0;
  padding: 4px 4px 0 3px;
  list-style: none;
  background: #fff;
  border: 1px solid #9aa3ad;
  border-width: 1px 0 0 1px;
  overflow: hidden;
}
.tree-row { display: flex; height: 18px; overflow: hidden; }
.guide { flex: none; width: 16px; background: no-repeat; position: relative; }
.g-v, .g-t { background-image: linear-gradient(#8f8f8f, #8f8f8f); background-size: 1px 100%; background-position: 8px 0; }
.g-l { background-image: linear-gradient(#8f8f8f, #8f8f8f); background-size: 1px 10px; background-position: 8px 0; }
.g-t::after, .g-l::after { content: ""; position: absolute; left: 8px; right: 0; top: 9px; height: 1px; background: #8f8f8f; }
.g-h { background-image: linear-gradient(#8f8f8f, #8f8f8f); background-size: 100% 1px; background-position: 0 9px; }
.g-box::before {
  content: "";
  position: absolute;
  left: 1px;
  top: 2px;
  width: 14px;
  height: 14px;
  border: 1px solid #8f8f8f;
  background: linear-gradient(#777, #777) center / 8px 2px no-repeat #fff;
}
.tree-text { flex: 1; min-width: 0; padding-left: 4px; line-height: 18px; white-space: pre; overflow: hidden; }
.tree-text.selected { background: #a9caf3; }
.nav-buttons { display: flex; gap: 6px; padding-top: 6px; }
.nav-buttons button {
  width: 25px;
  height: 25px;
  border: 1px solid #8a8e94;
  border-radius: 3px;
  background: linear-gradient(#fff, #dcdfe3);
  display: flex;
  align-items: center;
  justify-content: center;
}
.nav-buttons svg { width: 20px; height: 20px; fill: #b9d4fa; stroke: #2a4db5; }
.splitter { flex: none; width: 13px; display: flex; align-items: center; padding-left: 4px; background: linear-gradient(90deg, #e3edfa, #e0e9f7 60%, #e6e6e8); }
.splitter-grip { width: 6px; height: 40px; border: 1px solid #8f99a6; border-radius: 3px; background: #f5f8fc; }

.document { flex: 1; min-width: 0; display: flex; flex-direction: column; }
.view { flex: 1; min-height: 0; display: flex; background: #e3e3e3; }
.left-rail { flex: none; width: 24px; padding: 6px 5px 4px 3px; display: flex; flex-direction: column; }
.tab-kind { flex: none; width: 16px; height: 16px; margin-bottom: 5px; border: 1px solid #777; background: #fff; }
.tab-kind svg { width: 14px; height: 14px; }
.ruler-v { flex: 1; min-height: 0; width: 16px; border-bottom: 1px solid #777; }
.ruler-v text, .ruler-h text { font: 12px Roboto, sans-serif; fill: #222; }
.canvas { flex: 1; min-width: 0; display: flex; flex-direction: column; align-items: center; }
.ruler-wrap { flex: none; height: 28px; padding-top: 6px; z-index: 1; }
.ruler-h { width: 794px; height: 24px; }
.paper-area { flex: 1; min-height: 0; padding-bottom: 4px; display: flex; }
.paper {
  width: 794px;
  display: flex;
  flex-direction: column;
  justify-content: flex-end;
  padding: 0 22px 29px 75px;
  overflow: hidden;
  background: #fff;
  border: 1px solid #8c8c8c;
  border-top: 0;
  box-shadow: 1px 1px 3px #bbb;
}
.frame { border: 3px solid #000; border-top: 0; }
.toc { padding: 0 4px 149px 34px; font: 19px/22px "Liberation Serif", serif; }
.toc-row {
  display: flex;
  margin: 0 0 0 16px;
  padding: 0 9px 0 1px;
  background: #b9d6f8;
  white-space: pre;
}
.toc-row:nth-child(odd) { line-height: 21px; }
.toc-row.chapter { margin-left: 0; padding: 8px 9px 8px 1px; font-weight: 700; }
.toc-row.chapter + .chapter { padding-top: 0; }
.toc-row:last-child { margin-right: 9px; padding-right: 0; }
.toc-title small { font-size: 15px; line-height: 1px; text-transform: uppercase; }
.leader { flex: 1; min-width: 0; text-align: right; }
.toc-page { padding-left: 4px; }

/* основная надпись */
.stamp {
  display: flex;
  height: 153px;
  border-top: 3px solid #000;
  font: italic 12px/14px "Liberation Sans", sans-serif;
}
.changes { flex: none; width: 265px; border-spacing: 0; table-layout: fixed; }
.c1 { width: 35px; }
.c2 { width: 41px; }
.c3 { width: 95px; }
.c4 { width: 56px; }
.c5 { width: 38px; }
.changes td { height: 19px; padding: 0; border-right: 3px solid #000; border-bottom: 1px solid #000; }
.changes .thick td { border-bottom-width: 3px; }
.changes .short td { height: 18px; }
.changes .tall td { height: 20px; }
.changes tr:last-child td { border-bottom: 0; }
.changes .name { padding-right: 3px; }
.cell-box {
  border: 1px solid #c6c6c6;
  text-align: center;
  white-space: pre;
}
.changes .cell-box { height: 17px; line-height: 15px; }
.changes .head .cell-box { height: 16px; line-height: 16px; }
.cell-box.left { text-align: left; padding-left: 5px; }
.typo { text-decoration: underline wavy #dd3a3a 1px; text-decoration-skip-ink: none; }
.stamp-right { flex: 1; min-width: 0; display: flex; flex-direction: column; }
.doc-number { flex: none; height: 57px; padding: 14px 2px 0; border-bottom: 3px solid #000; font-size: 24px; line-height: 32px; }
.doc-number .cell-box { height: 28px; padding-left: 2px; }
.doc-bottom { flex: 1; min-height: 0; display: flex; }
.doc-title { flex: 1; padding: 2px 4px 5px 2px; border-right: 3px solid #000; font-size: 24px; line-height: 28px; }
.doc-title .cell-box { height: 100%; display: flex; align-items: center; justify-content: center; padding: 18px 0 0 4px; }
.doc-side { flex: none; width: 197px; display: flex; flex-direction: column; }
.side-grid { display: grid; grid-template-columns: 57px 57px 1fr; grid-template-rows: 19px 19px; }
.side-grid > div { border-right: 3px solid #000; border-bottom: 2px solid #000; }
.side-grid > div:nth-child(3n) { border-right: 0; padding-right: 3px; }
.side-grid .cell-box { height: 17px; line-height: 16px; }
.lits { display: flex; }
.lits i { flex: 1; border-left: 1px solid #000; }
.lits i:first-child { border: 0; }
.dept { flex: 1; padding: 4px 3px 3px 0; }
.dept .cell-box { height: 100%; display: flex; flex-direction: column; align-items: center; padding-top: 6px; font-size: 13px; line-height: 21px; }

/* прокрутка */
.vscroll { flex: none; width: 16px; display: flex; flex-direction: column; background: #ededed; }
.vscroll svg { width: 14px; height: 14px; }
.sb-btn { height: 16px; border: 1px solid #9b9b9b; border-radius: 2px; background: linear-gradient(135deg, #fafafa, #c4c4c4); }
.sb-track { flex: 1; padding-top: 23px; }
.sb-thumb { display: block; height: 10px; border: 1px solid #9b9b9b; border-radius: 2px; background: linear-gradient(90deg, #fafafa, #d2d2d2); }
.sb-nav { height: 17px; margin-top: 1px; border-bottom: 1px solid #8f959e; background: #e6eef8; display: flex; align-items: center; justify-content: center; }
.hscroll {
  flex: none;
  display: flex;
  justify-content: space-between;
  height: 17px;
  padding-right: 18px;
  border-top: 1px solid #c2c4d2;
  background: linear-gradient(#d9dbe8, #f0f1f8 60%, #fafbfe);
}
.hscroll button { width: 16px; background: #f0f0f0; }
.hscroll svg { width: 16px; height: 16px; }

/* строка состояния */
.statusbar {
  flex: none;
  display: flex;
  align-items: center;
  gap: 8px;
  height: 28px;
  padding: 0 16px 2px 6px;
  background: linear-gradient(#f7fafe, #e6eefa);
  border-top: 1px solid #fff;
}
.panel {
  flex: none;
  height: 18px;
  padding-left: 4px;
  line-height: 17px;
  border: 1px solid #a3a8b0;
  border-right-color: #fff;
  border-bottom-color: #fff;
}
.p-object { flex: 1; }
.p-pos { width: 110px; }
.p-section { width: 81px; }
.p-chapter { width: 75px; }
.p-page { width: 127px; }
.p-wide { width: 162px; }
.p-empty { width: 69px; }
.p-ins { width: 46px; padding: 0; text-align: center; margin-right: -6px; }
.view-btn { flex: none; width: 24px; height: 24px; margin-right: -8px; display: flex; align-items: center; justify-content: center; }
.view-btn svg { width: 20px; height: 20px; }
.zoom-btn {
  flex: none;
  width: 15px;
  height: 15px;
  border: 1px solid #9fb0c4;
  border-radius: 50%;
  background: radial-gradient(#fff 30%, #c9d8e8);
  color: #9b1c2c;
  font-weight: 700;
  line-height: 12px;
}
.zoom-out { margin-left: 8px; }
.zoom-range {
  appearance: none;
  width: 107px;
  height: 16px;
  margin: 0 -4px;
  background: linear-gradient(#777, #777) center / 100% 1px no-repeat;
}
.zoom-range::-webkit-slider-thumb {
  appearance: none;
  width: 9px;
  height: 9px;
  border: 1px solid #b98a2c;
  border-radius: 50%;
  background: #f6c14a;
}
.zoom-value { width: 37px; text-align: right; }

/* панель задач */
.taskbar {
  flex: none;
  display: flex;
  align-items: center;
  gap: 3px;
  height: 40px;
  color: #fff;
  border-top: 1px solid #1c2a4c;
  background:
    radial-gradient(ellipse at 62% 100%, #3c5fae 0, transparent 14%),
    radial-gradient(ellipse at 74% 0, #3d4b80 0, transparent 12%),
    linear-gradient(90deg, #24386e, #3c5494 30%, #40578f 60%, #233463 78%, #26376a 90%, #1f3b78);
}
.start { flex: none; width: 54px; height: 39px; margin-right: 3px; display: flex; justify-content: center; align-items: center; }
.start svg { width: 38px; height: 38px; }
.task {
  flex: 0 1 159px;
  min-width: 0;
  height: 38px;
  display: flex;
  align-items: center;
  gap: 5px;
  padding-left: 9px;
  border: 1px solid #a3afcf;
  border-radius: 3px;
  box-shadow: 0 0 0 1px #1c2a4c;
  background: linear-gradient(165deg, #a9b4d2, #7183b2 35%, #53689f 50%, #5f74ad);
  white-space: pre;
  overflow: hidden;
}
.task.current { border-color: #dde3f2; background: linear-gradient(165deg, #dde2ee, #a4aec9 40%, #8e9bc0 55%, #a9b3d0); }
.task svg { width: 30px; height: 30px; }
.task-text { text-shadow: 0 0 2px #223; }
.task-text.shifted { padding-left: 9px; }
.tray { margin-left: auto; height: 100%; display: flex; align-items: center; }
.tray svg { width: 18px; height: 18px; }
.lang { margin: 0 8px 4px 0; }
.tray button { width: 24px; display: flex; justify-content: center; }
.clock { width: 80px; display: flex; flex-direction: column; align-items: center; line-height: 17px; }
.tray .show-desktop { width: 13px; height: 39px; margin: 0 1px 0 0; border: 1px solid #8c9cc4; background: linear-gradient(#6f82b2, #2e4177); }
</style>
